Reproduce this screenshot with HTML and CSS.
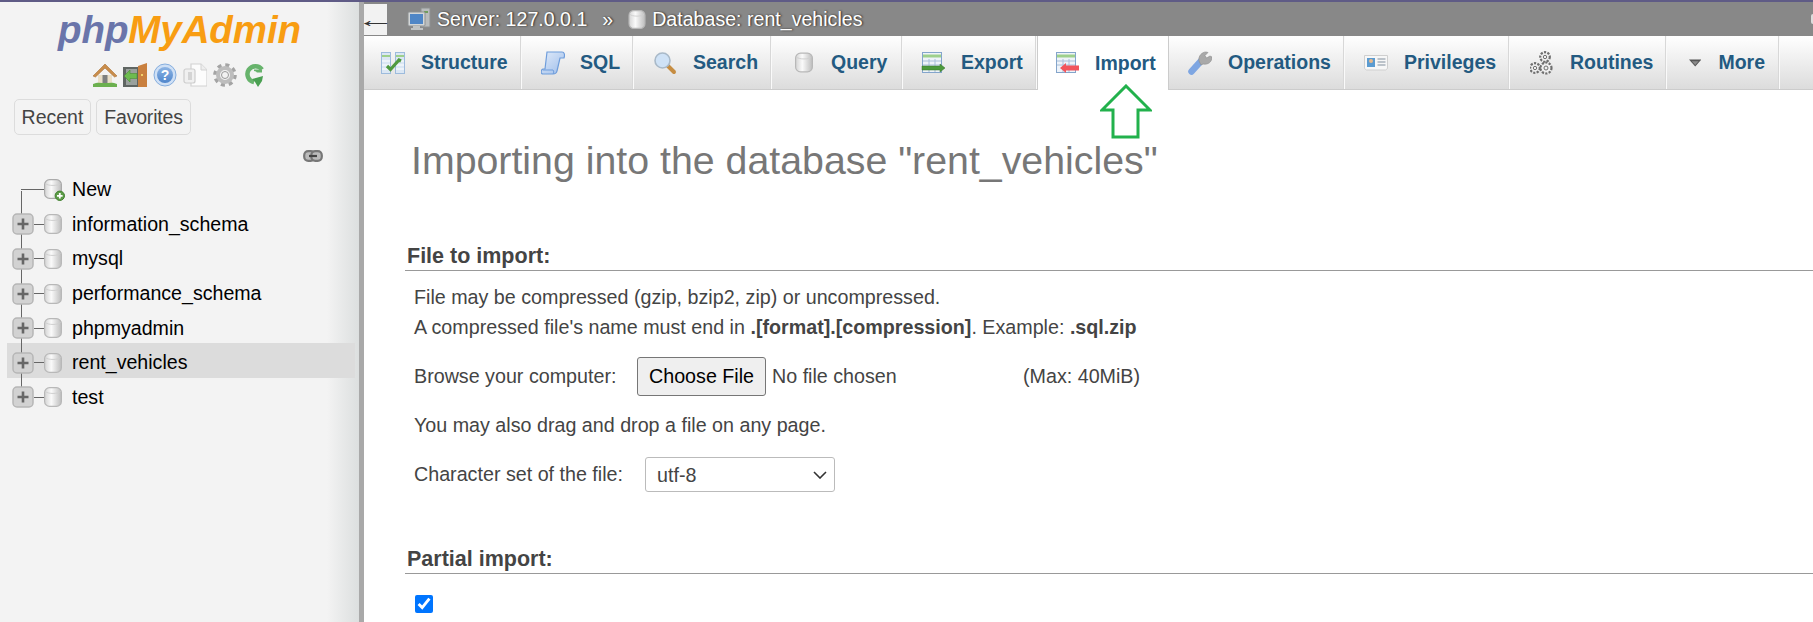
FILE: index.html
```html
<!DOCTYPE html>
<html lang="en">
<head>
<meta charset="utf-8">
<title>phpMyAdmin - Import</title>
<link rel="stylesheet" href="styles.css">
</head>
<body>
<svg class="defs" aria-hidden="true">
  <defs>
    <linearGradient id="gDb" x1="0" x2="1" y1="0" y2="0"><stop offset="0" stop-color="#d4d4d4"/><stop offset=".4" stop-color="#fafafa"/><stop offset="1" stop-color="#bdbdbd"/></linearGradient>
    <linearGradient id="gHelp" x1="0" x2="0" y1="0" y2="1"><stop offset="0" stop-color="#8db4e4"/><stop offset="1" stop-color="#4f86cc"/></linearGradient>
    <linearGradient id="gScroll" x1="0" x2="1" y1="0" y2="1"><stop offset="0" stop-color="#e2ecfa"/><stop offset="1" stop-color="#9dbdea"/></linearGradient>

    <symbol id="db" viewBox="0 0 18 20">
      <rect x=".6" y=".6" width="16.800" height="18.800" rx="5" fill="url(#gDb)" stroke="#b8b8b8" stroke-width="1.200"/>
      <path d="M1.500 4.500c2 2.600 13 2.600 15 0" fill="none" stroke="#d0d0d0"/>
    </symbol>
    <symbol id="dbnew" viewBox="0 0 21 22">
      <rect x=".6" y=".6" width="16.800" height="18.800" rx="5" fill="url(#gDb)" stroke="#aaa" stroke-width="1.200"/>
      <path d="M1.500 4.500c2 2.600 13 2.600 15 0" fill="none" stroke="#d0d0d0"/>
      <circle cx="15.800" cy="16.800" r="4.700" fill="#5c9c47" stroke="#41802f"/>
      <path d="M15.800 14v5.600M13 16.800h5.600" stroke="#fff" stroke-width="1.800"/>
    </symbol>
    <symbol id="plus" viewBox="0 0 22 22">
      <rect x="1" y="1" width="20" height="20" rx="4" fill="#d2d2d2" stroke="#b6b6b6" stroke-width="1.500"/>
      <path d="M11 5.500v11M5.500 11h11" stroke="#666" stroke-width="2.600"/>
    </symbol>
    <symbol id="home" viewBox="0 0 24 24">
      <path d="M5 12h14v9H5z" fill="#eadfc8"/>
      <path d="M0 13 12 1l12 12-2.500 1L12 5 2.500 14z" fill="#c98d4b" stroke="#a96f32" stroke-width=".6"/>
      <path d="M9.500 12h5v9h-5z" fill="#7e8080"/>
      <path d="M0 21c4-2 8-1 12-1s8-1 12 1v3H0z" fill="#6cb04f"/>
    </symbol>
    <symbol id="exit" viewBox="0 0 24 24">
      <path d="M0 4h16v20H0z" fill="#5f6562"/>
      <path d="M3 6h11v16H3z" fill="#9aa19d"/>
      <path d="M1 13l6-6v3.500h7v5H7V19z" fill="#6dbb4f" stroke="#4a8f33" stroke-width=".6"/>
      <path d="M15 3l9-3v24h-9z" fill="#c9803f"/>
      <rect x="18" y="11" width="2" height="2" fill="#f2d36b"/>
    </symbol>
    <symbol id="help" viewBox="0 0 24 24">
      <circle cx="12" cy="12" r="11" fill="#cfe0f5" stroke="#86aede"/>
      <circle cx="12" cy="12" r="8" fill="url(#gHelp)"/>
      <text x="12" y="17" text-anchor="middle" class="help-q">?</text>
    </symbol>
    <symbol id="docs" viewBox="0 0 24 24">
      <path d="M8 1h10l6 6v16H8z" fill="#fcfcfc" stroke="#d2d2d2" stroke-width="1.200"/>
      <path d="M18 1v6h6" fill="#eee" stroke="#d2d2d2"/>
      <rect x="1" y="6" width="11" height="14" rx="2" fill="#f0f0f0" stroke="#cdcdcd" stroke-width="1.200"/>
      <rect x="5" y="9" width="4" height="8" fill="#d4d4d4"/>
    </symbol>
    <symbol id="gear" viewBox="0 0 24 24">
      <circle cx="12" cy="12" r="10" fill="none" stroke="#a4a4a4" stroke-width="3.600" stroke-dasharray="4 3.850"/>
      <circle cx="12" cy="12" r="7" fill="none" stroke="#bdbdbd" stroke-width="4"/>
      <circle cx="12" cy="12" r="3.500" fill="#f2f2f2" stroke="#999"/>
    </symbol>
    <symbol id="reload" viewBox="0 0 20 24">
      <path d="M17 6.500A8 8 0 1 0 9 19" fill="none" stroke="#67b36c" stroke-width="4.500"/>
      <path d="M9 8h8" stroke="#67b36c" stroke-width="3"/>
      <path d="M7 16l11-3-1 5-4 6-3-5z" fill="#4aa052"/>
      <circle cx="9" cy="11" r="3" fill="#f3f3f3"/>
    </symbol>
    <symbol id="link" viewBox="0 0 20 12">
      <rect x="1.200" y="1.200" width="10.500" height="9.600" rx="4" fill="#bbb" stroke="#777" stroke-width="2.200"/>
      <rect x="8.300" y="1.200" width="10.500" height="9.600" rx="4" fill="#bbb" stroke="#777" stroke-width="2.200"/>
      <path d="M6 6h8" stroke="#444" stroke-width="2.200"/>
    </symbol>
    <symbol id="server" viewBox="0 0 24 24">
      <path d="M14 1h9v19h-9z" fill="#b9bcbd" stroke="#8d9091"/>
      <rect x="17" y="4" width="4" height="2" fill="#6f9c5c"/>
      <rect x="1" y="5" width="17" height="14" rx="1" fill="#d3d6d7" stroke="#8d9091"/>
      <rect x="3" y="7" width="13" height="10" fill="#4f86c6"/>
      <path d="M6 19h7v2h3v2H4v-2h2z" fill="#c0c3c4"/>
    </symbol>
    <symbol id="structure" viewBox="0 0 24 24">
      <rect x=".5" y="1.500" width="9" height="21" fill="#dbe7f4" stroke="#9dbbdc"/>
      <rect x="14.500" y="1.500" width="9" height="21" fill="#dbe7f4" stroke="#9dbbdc"/>
      <path d="M1 5h8M15 5h8" stroke="#9ed08c" stroke-width="2"/>
      <path d="M1 10h8M1 14h8M1 18h8M15 10h8M15 14h8M15 18h8" stroke="#fff"/>
      <path d="M6 15l3.500 3.500L18 9l2 1" fill="none" stroke="#4f9a3f" stroke-width="3.200"/>
    </symbol>
    <symbol id="sql" viewBox="0 0 24 24">
      <path d="M6 1h15c2.500 0 3 3 2 6h-4l-3 13c-.5 2.500-2 3-4 3H2c-2.500 0-2.500-4 0-5h2z" fill="url(#gScroll)" stroke="#6f9ddb" stroke-width="1.200"/>
      <path d="M2 19h10c1 1 1 3 0 4" fill="none" stroke="#6f9ddb"/>
    </symbol>
    <symbol id="search" viewBox="0 0 24 24">
      <path d="M14 14l7 7" stroke="#c68d42" stroke-width="4" stroke-linecap="round"/>
      <circle cx="9.500" cy="9.500" r="7.500" fill="#cfe2f6" stroke="#a9b9c8" stroke-width="1.600"/>
    </symbol>
    <symbol id="export" viewBox="0 0 24 24">
      <rect x="1.500" y="1.500" width="19" height="20" fill="#eef3f9" stroke="#84a5cb"/>
      <path d="M2 5h18" stroke="#9ed08c" stroke-width="3"/>
      <path d="M2 10h18M2 14h18M8 8v13M14 8v13" stroke="#a8bfd9"/>
      <path d="M1 15h18v-2l5 4-5 4v-2H1z" fill="#4c9a3c" stroke="#37752a" stroke-width=".5"/>
    </symbol>
    <symbol id="import" viewBox="0 0 24 24">
      <rect x="1.500" y="1.500" width="19" height="20" fill="#eef3f9" stroke="#84a5cb"/>
      <path d="M2 5h18" stroke="#9ed08c" stroke-width="3"/>
      <path d="M2 10h18M2 14h18M8 8v13M14 8v13" stroke="#a8bfd9"/>
      <path d="M24 14.500H11v-2.500l-6 5 6 5v-2.500h13z" fill="#f2555c"/>
    </symbol>
    <symbol id="wrench" viewBox="0 0 24 24">
      <path d="M3.500 20.500 13 10" stroke="#7ea6e2" stroke-width="6.500" stroke-linecap="round"/>
      <path d="M11 10c-1-5 3-9 7-9l2 .5-3 3 1.500 2.500 3.500-2 2 1c0 5-4 8-9 7l-2 1z" fill="#a9a9a9" stroke="#8c8c8c" stroke-width=".6"/>
    </symbol>
    <symbol id="card" viewBox="0 0 24 24">
      <path d="M.5 4.500h23v13l-2 1.500H2.500l-2-1.500z" fill="#f7f7f7" stroke="#cfcfcf"/>
      <rect x="3" y="7" width="8" height="9" fill="#5b9bd0"/>
      <circle cx="7" cy="10" r="2" fill="#e8b98c"/>
      <path d="M13.500 8h8M13.500 11h8M13.500 14h8" stroke="#a9b2bc" stroke-width="1.400"/>
    </symbol>
    <symbol id="routines" viewBox="0 0 24 24">
      <g fill="#efefef" stroke="#6f6f6f">
        <circle cx="15" cy="6" r="4.800" stroke-width="2.200" stroke-dasharray="2.200 1.300"/>
        <circle cx="16" cy="17" r="5.500" stroke-width="2.200" stroke-dasharray="2.200 1.300"/>
        <circle cx="5" cy="17" r="4.800" stroke-width="2.200" stroke-dasharray="2.200 1.300"/>
        <circle cx="15" cy="6" r="1.700"/>
        <circle cx="16" cy="17" r="2"/>
        <circle cx="5" cy="17" r="1.700"/>
      </g>
    </symbol>
    <symbol id="more" viewBox="0 0 18 10">
      <path d="M0 0h18L9 10z" fill="#555"/>
      <path d="M4 2.500h10L9 8z" fill="#8a8a8a"/>
    </symbol>
  </defs>
</svg>

<div class="page">
  <aside class="sidebar">
    <div class="logo"><span class="logo-php">php</span><span class="logo-my">MyAdmin</span></div>
    <div class="quick-icons">
      <svg class="ic24"><use href="#home"/></svg>
      <svg class="ic24"><use href="#exit"/></svg>
      <svg class="ic24"><use href="#help"/></svg>
      <svg class="ic24"><use href="#docs"/></svg>
      <svg class="ic24"><use href="#gear"/></svg>
      <svg class="ic-reload"><use href="#reload"/></svg>
    </div>
    <div class="recent-row">
      <button class="side-btn side-recent">Recent</button>
      <button class="side-btn side-fav">Favorites</button>
    </div>
    <div class="link-row"><svg class="ic-link"><use href="#link"/></svg></div>
    <ul class="tree">
      <li class="tree-row tree-new"><span class="exp-spacer"></span><span class="conn conn-long"></span><svg class="ic-dbnew"><use href="#dbnew"/></svg><span class="tree-label tree-label-new">New</span></li>
      <li class="tree-row"><svg class="ic-plus"><use href="#plus"/></svg><span class="conn"></span><svg class="ic-db"><use href="#db"/></svg><span class="tree-label">information_schema</span></li>
      <li class="tree-row"><svg class="ic-plus"><use href="#plus"/></svg><span class="conn"></span><svg class="ic-db"><use href="#db"/></svg><span class="tree-label">mysql</span></li>
      <li class="tree-row"><svg class="ic-plus"><use href="#plus"/></svg><span class="conn"></span><svg class="ic-db"><use href="#db"/></svg><span class="tree-label">performance_schema</span></li>
      <li class="tree-row"><svg class="ic-plus"><use href="#plus"/></svg><span class="conn"></span><svg class="ic-db"><use href="#db"/></svg><span class="tree-label">phpmyadmin</span></li>
      <li class="tree-row tree-active"><svg class="ic-plus"><use href="#plus"/></svg><span class="conn"></span><svg class="ic-db"><use href="#db"/></svg><span class="tree-label">rent_vehicles</span></li>
      <li class="tree-row tree-last"><svg class="ic-plus"><use href="#plus"/></svg><span class="conn"></span><svg class="ic-db"><use href="#db"/></svg><span class="tree-label">test</span></li>
    </ul>
  </aside>
  <div class="divider"></div>
  <main class="main">
    <div class="crumbs">
      <span class="back"><span class="back-glyph">←</span></span>
      <svg class="ic24 crumb-server"><use href="#server"/></svg>
      <span class="crumb-text">Server: 127.0.0.1</span>
      <span class="crumb-sep">»</span>
      <svg class="ic-crumb-db"><use href="#db"/></svg>
      <span class="crumb-text">Database: rent_vehicles</span>
      <span class="crumb-end"></span>
    </div>
    <nav class="tabs">
      <a class="tab tab-structure"><svg class="ic24"><use href="#structure"/></svg>Structure</a>
      <a class="tab tab-sql"><svg class="ic24"><use href="#sql"/></svg>SQL</a>
      <a class="tab tab-search"><svg class="ic24"><use href="#search"/></svg>Search</a>
      <a class="tab tab-query"><svg class="ic-query"><use href="#db"/></svg>Query</a>
      <a class="tab tab-export"><svg class="ic24"><use href="#export"/></svg>Export</a>
      <a class="tab tab-import"><svg class="ic24"><use href="#import"/></svg>Import</a>
      <a class="tab tab-ops"><svg class="ic24"><use href="#wrench"/></svg>Operations</a>
      <a class="tab tab-priv"><svg class="ic24"><use href="#card"/></svg>Privileges</a>
      <a class="tab tab-rout"><svg class="ic24"><use href="#routines"/></svg>Routines</a>
      <a class="tab tab-more"><svg class="ic-more"><use href="#more"/></svg>More</a>
    </nav>
    <svg class="callout" viewBox="0 0 52 56" aria-hidden="true"><path d="M26 2 50 26H38V53H13V26H2z" fill="none" stroke="#22b14c" stroke-width="3"/></svg>
    <div class="content">
      <h2 class="title">Importing into the database "rent_vehicles"</h2>
      <h3 class="section-head section-file">File to import:</h3>
      <div class="section-body">
        <p class="line">File may be compressed (gzip, bzip2, zip) or uncompressed.</p>
        <p class="line">A compressed file's name must end in <b>.[format].[compression]</b>. Example: <b>.sql.zip</b></p>
        <div class="browse-row">
          <label class="browse-label">Browse your computer:</label>
          <input class="file" type="file">
          <span class="max">(Max: 40MiB)</span>
        </div>
        <p class="line drag">You may also drag and drop a file on any page.</p>
        <div class="charset-row">
          <label class="charset-label">Character set of the file:</label>
          <select class="charset"><option>utf-8</option></select>
        </div>
      </div>
      <h3 class="section-head section-partial">Partial import:</h3>
      <div class="section-body">
        <input class="check" type="checkbox" checked>
      </div>
    </div>
  </main>
</div>
</body>
</html>
```

FILE: styles.css
```css
* { box-sizing: border-box; }
html, body { margin: 0; padding: 0; height: 622px; overflow: hidden; }
body {
  font-family: "Liberation Sans", Arial, sans-serif;
  font-size: 19.5px;
  color: #444;
  background: #fff;
  border-top: 2px solid #5f5b86;
}
.defs { position: absolute; width: 0; height: 0; }
.page { display: flex; height: 620px; }

/* sidebar */
.sidebar {
  width: 359px;
  flex: none;
  background: linear-gradient(to right, #f3f3f3 calc(100% - 32px), #dcdfdf 100%);
}
.logo {
  margin-top: 8px;
  height: 40px;
  line-height: 40px;
  text-align: center;
  font-size: 38.5px;
  font-weight: bold;
  font-style: italic;
  letter-spacing: -.1px;
}
.logo-php { color: #6a75aa; }
.logo-my { color: #f89d12; }
.quick-icons { display: flex; gap: 6px; margin: 13px 0 0 93px; align-items: center; }
.ic24 { width: 24px; height: 24px; flex: none; display: block; }
.ic-reload { width: 20px; height: 24px; margin-left: 2px; display: block; }
.help-q { font-family: "Liberation Sans", sans-serif; font-size: 14px; font-weight: bold; fill: #fff; }
.recent-row { display: flex; gap: 5px; margin: 12px 0 0 14px; }
.side-btn {
  height: 36px;
  padding: 0;
  background: #f3f3f3;
  border: 1px solid #dcdcdc;
  border-radius: 5px;
  font: inherit;
  color: #444;
}
.side-recent { width: 77px; }
.side-fav { width: 95px; letter-spacing: -.2px; }
.link-row { display: flex; justify-content: flex-end; margin: 15px 36px 0 0; height: 12px; }
.ic-link { width: 20px; height: 12px; display: block; }

.tree { list-style: none; margin: 8px 0 0 7px; padding: 0; width: 348px; }
.tree-row {
  position: relative;
  display: flex;
  align-items: center;
  height: 34.600px;
  padding: 5px 0 0 5px;
  color: #000;
  font-size: 19.6px;
}
.tree-row::before {
  content: "";
  position: absolute;
  left: 14px;
  top: 0;
  bottom: 0;
  width: 1px;
  background: #666;
}
.tree-new::before { top: 21px; }
.tree-last::before { bottom: 13px; }
.tree-active { background: #dcdcdc; }
.exp-spacer { width: 9px; flex: none; }
.ic-plus { position: relative; width: 22px; height: 22px; flex: none; }
.conn { width: 10px; height: 1px; background: #666; flex: none; }
.conn-long { width: 23px; }
.ic-db { width: 18px; height: 20px; flex: none; }
.ic-dbnew { width: 21px; height: 22px; flex: none; }
.tree-label { margin-left: 10px; white-space: nowrap; }
.tree-label-new { margin-left: 7px; }

.divider { width: 5px; flex: none; background: #a9a9a9; }

/* main */
.main { flex: 1; min-width: 0; position: relative; }
.crumbs {
  display: flex;
  align-items: center;
  height: 34px;
  background: #888;
  color: #fff;
  font-size: 19.6px;
}
.back {
  display: flex;
  align-items: center;
  justify-content: center;
  width: 23px;
  height: 31px;
  margin-top: 1px;
  background: #f2f2f2;
  color: #333;
  font-size: 22px;
  flex: none;
}
.back-glyph { display: block; line-height: 31px; transform: scaleX(1.750); }
.crumb-server { margin-left: 20px; }
.crumb-text { margin-left: 6px; text-shadow: 1px 0 2px #222; white-space: nowrap; }
.crumb-sep { margin: 0 15px; font-weight: normal; text-shadow: 1px 0 2px #222; }
.ic-crumb-db { width: 18px; height: 19px; }
.crumb-end { width: 2px; height: 10px; margin-left: auto; background: #dcdcdc; border-radius: 2px 0 0 2px; }

.tabs {
  display: flex;
  height: 54px;
  background: linear-gradient(#fff, #dcdcdc);
  border-bottom: 1px solid #ccc;
}
.tab {
  display: flex;
  align-items: center;
  gap: 16px;
  padding: 0 14px 0 17px;
  font-weight: bold;
  color: #235a81;
  white-space: nowrap;
  border-right: 1px solid #fafafa;
  box-shadow: inset -1px 0 0 #d8d8d8;
}
.ic-query { width: 18px; height: 21px; margin: 0 2px 0 2px; }
.ic-more { width: 18px; height: 10px; }
.tab-structure { width: 158px; }
.tab-sql { width: 112px; padding-left: 19px; gap: 15px; }
.tab-search { width: 138px; padding-left: 19px; }
.tab-query { width: 131px; padding-left: 21px; }
.tab-export { width: 134px; padding-left: 18px; }
.tab-import {
  width: 132px;
  padding-left: 17px;
  margin-bottom: -1px;
  background: #fff;
  border-left: 1px solid #ccc;
  border-right: 1px solid #ccc;
  box-shadow: none;
}
.tab-ops { width: 176px; padding-left: 19px; }
.tab-priv { width: 165px; padding-left: 19px; }
.tab-rout { width: 157px; padding-left: 20px; }
.tab-more { width: 113px; padding-left: 22px; gap: 17px; }

.callout { position: absolute; left: 736px; top: 82px; width: 52px; height: 56px; }

.content { padding-left: 41px; font-size: 19.7px; }
.title {
  margin: 48px 0 0;
  padding-left: 6px;
  height: 44px;
  line-height: 44px;
  font-size: 39.3px;
  font-weight: normal;
  color: #777;
  white-space: nowrap;
}
.section-head {
  height: 29px;
  margin: 0;
  padding-left: 2px;
  line-height: 28px;
  font-size: 21.5px;
  font-weight: bold;
  color: #444;
  border-bottom: 1px solid #999;
}
.section-file { margin-top: 60px; }
.section-partial { margin-top: 53px; }
.section-body { padding-left: 9px; }
.line { margin: 0; height: 30px; line-height: 30px; white-space: nowrap; }
.section-file + .section-body > .line:first-child { margin-top: 11px; }
.browse-row { display: flex; align-items: center; margin-top: 15px; height: 39px; }
.browse-label { width: 223px; flex: none; }
.file { width: 386px; flex: none; font: inherit; color: #444; }
.file::file-selector-button {
  width: 129px;
  height: 39px;
  margin-right: 6px;
  padding: 0;
  font: inherit;
  color: #000;
  background: #efefef;
  border: 1px solid #767676;
  border-radius: 3px;
}
.max { white-space: nowrap; }
.drag { margin-top: 14px; }
.charset-row { display: flex; align-items: center; margin-top: 17px; height: 35px; }
.charset-label { width: 231px; flex: none; }
.charset {
  appearance: none;
  width: 190px;
  height: 35px;
  padding-left: 11px;
  font: inherit;
  color: #444;
  background: #fff url("data:image/svg+xml,%3Csvg xmlns='http://www.w3.org/2000/svg' width='14' height='8'%3E%3Cpath d='M1 1l6 6 6-6' fill='none' stroke='%23333' stroke-width='1.600'/%3E%3C/svg%3E") no-repeat right 7px center;
  border: 1px solid #bbb;
  border-radius: 3px;
}
.check { display: block; width: 18px; height: 18px; margin: 21px 0 0 1px; }
```
